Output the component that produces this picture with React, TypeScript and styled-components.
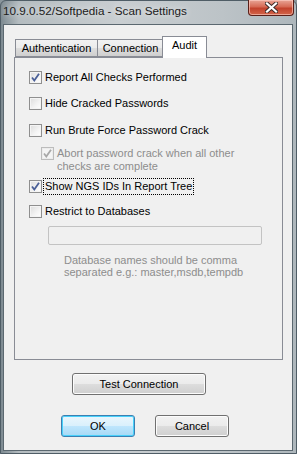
import { FC } from 'react'
import styled, { createGlobalStyle } from 'styled-components'

const GlobalStyle = createGlobalStyle`
  html, body {
    margin: 0;
    padding: 0;
    background: #8a969c;
  }
  * {
    box-sizing: border-box;
  }
`

const FONT = `'Segoe UI', 'Liberation Sans', Arial, sans-serif`

const Window = styled.div`
  width: 297px;
  height: 454px;
  display: flex;
  flex-direction: column;
  background: linear-gradient(90deg, #7d8a91 0%, #b4bcc0 6%, #c9ced1 40%, #bcc3c7 75%, #aeb7bc 100%);
  border: 1px solid #4f5d66;
  border-radius: 6px 6px 0 0;
  font-family: ${FONT};
`

const TitleBar = styled.div`
  height: 23px;
  display: flex;
  align-items: flex-start;
  justify-content: space-between;
  padding-left: 2px;
  padding-right: 2px;
`

const Title = styled.span`
  margin-top: 3px;
  font-size: 11.7px;
  color: #1b1b1b;
  text-shadow: 0 0 6px rgba(255, 255, 255, 0.9);
`

const CloseButton = styled.div`
  width: 46px;
  height: 16px;
  margin-top: -1px;
  border: 1px solid #5a1f18;
  border-top: none;
  border-radius: 0 0 4px 4px;
  background: linear-gradient(180deg, #e8a596 0%, #d66a55 45%, #c2422c 55%, #d2654a 100%);
  box-shadow: inset 0 0 0 1px rgba(255, 210, 200, 0.6);
  display: flex;
  align-items: center;
  justify-content: center;
`

const Client = styled.div`
  flex: 1;
  margin: 0 3px 2px 2px;
  background: #f0f0f0;
  border: 1px solid #5b6870;
  display: flex;
  flex-direction: column;
  align-items: flex-start;
  padding: 11px 10px 0 10px;
  color: #000;
  font-size: 11px;
`

const TabStrip = styled.div`
  display: flex;
  align-items: flex-end;
  height: 21px;
  padding-left: 1px;
  position: relative;
  z-index: 1;
`

const Tab = styled.div<{ active?: boolean; w: number }>`
  width: ${(p) => p.w}px;
  height: ${(p) => (p.active ? 22 : 18)}px;
  margin-bottom: ${(p) => (p.active ? -1 : 0)}px;
  margin-left: ${(p) => (p.active ? -1 : 0)}px;
  padding-top: ${(p) => (p.active ? 2 : 0)}px;
  display: flex;
  justify-content: center;
  align-items: ${(p) => (p.active ? 'flex-start' : 'center')};
  border: 1px solid #898c95;
  border-bottom: ${(p) => (p.active ? 'none' : '1px solid #898c95')};
  border-right: ${(p) => (p.active ? '1px solid #898c95' : 'none')};
  background: ${(p) =>
    p.active ? '#ffffff' : 'linear-gradient(180deg, #f2f2f2 0%, #ebebeb 50%, #dddddd 51%, #cfcfcf 100%)'};
  font-size: 11px;
  white-space: nowrap;
`

const Panel = styled.div`
  width: 269px;
  height: 303px;
  border: 1px solid #898c95;
  background: #f0f0f0;
  padding: 13px 0 0 14px;
  display: flex;
  flex-direction: column;
  align-self: flex-start;
`

const Row = styled.div<{ gap: number; indent?: number }>`
  display: flex;
  align-items: flex-start;
  gap: 3px;
  margin-top: ${(p) => p.gap}px;
  margin-left: ${(p) => p.indent ?? 0}px;
  line-height: 13px;
`

const Label = styled.span<{ disabled?: boolean; focused?: boolean }>`
  color: ${(p) => (p.disabled ? '#8d8d8d' : '#000')};
  outline: ${(p) => (p.focused ? '1px dotted #000' : 'none')};
  outline-offset: 1px;
  font-size: 11px;
  white-space: nowrap;
  line-height: 13px;
`

const Box = styled.span<{ disabled?: boolean }>`
  width: 13px;
  height: 13px;
  flex: none;
  border: 1px solid ${(p) => (p.disabled ? '#bcbcbc' : '#8f8f8f')};
  background: ${(p) => (p.disabled ? '#f4f4f4' : 'linear-gradient(135deg, #dcdcdc 0%, #f4f4f4 60%, #ffffff 100%)')};
  box-shadow: inset 0 0 0 1px ${(p) => (p.disabled ? '#ececec' : '#f4f4f4')};
  display: flex;
  align-items: center;
  justify-content: center;
`

const DbInput = styled.div`
  width: 214px;
  height: 19px;
  margin: 8px 0 0 19px;
  border: 1px solid #c3c3c3;
  border-radius: 2px;
  background: #f0f0f0;
`

const Hint = styled.div`
  margin: 9px 0 0 35px;
  color: #8d8d8d;
  font-size: 11px;
  line-height: 12px;
`

const Button = styled.div<{ w: number; primary?: boolean }>`
  width: ${(p) => p.w}px;
  height: 22px;
  border: 1px solid ${(p) => (p.primary ? '#3c7fb1' : '#707070')};
  border-radius: 3px;
  background: ${(p) =>
    p.primary
      ? 'linear-gradient(180deg, #eaf6fd 0%, #d9f0fc 50%, #bee6fd 51%, #a7d9f5 100%)'
      : 'linear-gradient(180deg, #f2f2f2 0%, #ebebeb 50%, #dddddd 51%, #cfcfcf 100%)'};
  box-shadow: inset 0 0 0 1px ${(p) => (p.primary ? '#48d1fb' : '#fcfcfc')};
  display: flex;
  align-items: center;
  justify-content: center;
  font-size: 11px;
`

const TestRow = styled.div`
  margin: 13px 0 0 58px;
`

const ButtonRow = styled.div`
  display: flex;
  gap: 20px;
  margin: 20px 0 0 47px;
`

const Check: FC<{ disabled?: boolean }> = ({ disabled }) => (
  <svg width='9' height='9' viewBox='0 0 9 9'>
    <path
      d='M1 4.5 L3.3 7.5 L8 0.8'
      fill='none'
      stroke={disabled ? '#a8a8a8' : '#4a5f97'}
      strokeWidth='1.8'
    />
  </svg>
)

const CheckRow: FC<{
  label: string
  checked?: boolean
  disabled?: boolean
  focused?: boolean
  gap: number
  indent?: number
}> = ({ label, checked, disabled, focused, gap, indent }) => (
  <Row gap={gap} indent={indent}>
    <Box disabled={disabled}>{checked && <Check disabled={disabled} />}</Box>
    <Label disabled={disabled} focused={focused}>
      {label}
    </Label>
  </Row>
)

const App: FC = () => {
  return (
    <Window>
      <GlobalStyle />
      <TitleBar>
        <Title>10.9.0.52/Softpedia - Scan Settings</Title>
        <CloseButton>
          <svg width='13' height='11' viewBox='0 0 13 11'>
            <path d='M2 1.5 L11 9.5 M11 1.5 L2 9.5' stroke='#3a2a28' strokeWidth='4' strokeLinecap='square' />
            <path d='M2 1.5 L11 9.5 M11 1.5 L2 9.5' stroke='#ffffff' strokeWidth='2.2' strokeLinecap='square' />
          </svg>
        </CloseButton>
      </TitleBar>
      <Client>
        <TabStrip>
          <Tab w={82}>Authentication</Tab>
          <Tab w={66}>Connection</Tab>
          <Tab w={45} active>
            Audit
          </Tab>
        </TabStrip>
        <Panel>
          <CheckRow label='Report All Checks Performed' checked gap={0} />
          <CheckRow label='Hide Cracked Passwords' gap={13} />
          <CheckRow label='Run Brute Force Password Crack' gap={14} />
          <Row gap={10} indent={12}>
            <Box disabled>
              <Check disabled />
            </Box>
            <Label disabled>
              Abort password crack when all other
              <br />
              checks are complete
            </Label>
          </Row>
          <CheckRow label='Show NGS IDs In Report Tree' checked focused gap={7} />
          <CheckRow label='Restrict to Databases' gap={12} />
          <DbInput />
          <Hint>
            Database names should be comma
            <br />
            separated e.g.: master,msdb,tempdb
          </Hint>
        </Panel>
        <TestRow>
          <Button w={134}>Test Connection</Button>
        </TestRow>
        <ButtonRow>
          <Button w={74} primary>
            OK
          </Button>
          <Button w={74}>Cancel</Button>
        </ButtonRow>
      </Client>
    </Window>
  )
}

export default App
